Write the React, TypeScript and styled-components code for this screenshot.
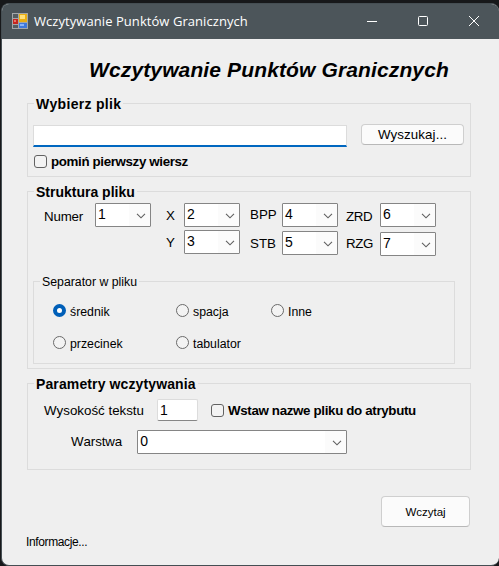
import React from "react";
import styled, { createGlobalStyle } from "styled-components";

const GlobalStyle = createGlobalStyle`
  *, *::before, *::after { box-sizing: border-box; }
  html, body, #root { height: 100%; }
  body {
    margin: 0;
    background: #17181a;
    overflow: hidden;
    color: #000;
    font: 13.33px/16px "Liberation Sans", Arial, sans-serif;
    font-kerning: none;
  }
`;

const Desktop = styled.div`
  width: 499px;
  height: 566px;
  padding: 3px 0 0 1px;
`;

const Window = styled.main`
  width: 498px;
  height: 563px;
  display: flex;
  flex-direction: column;
  overflow: hidden;
  border: 1px solid #454e53;
  border-right: 0;
  border-radius: 8px;
  background: #efefef;
`;

const TitleBar = styled.header`
  flex: none;
  height: 35px;
  display: flex;
  align-items: center;
  padding: 0 0 1px 10px;
  background: #4c555a;
  color: #fff;
`;

const Caption = styled.span`
  flex: 1;
  margin-left: 6px;
  font: 13px/18px "Open Sans", "Noto Sans", sans-serif;
  letter-spacing: 0.06px;
  white-space: nowrap;
`;

const WindowButtons = styled.div`
  display: flex;
  gap: 41px;
  margin-right: 20px;
  svg { display: block; }
`;

const Client = styled.form`
  flex: 1;
  display: flex;
  flex-direction: column;
  padding: 0 28px 0 25px;
`;

const Heading = styled.h1`
  margin: 19px 0 0 62px;
  font-size: 21px;
  line-height: 24px;
  font-weight: bold;
  font-style: italic;
  letter-spacing: 0.13px;
  white-space: nowrap;
`;

const Group = styled.fieldset<{ $height: number; $top: number }>`
  min-width: 0;
  height: ${(p) => p.$height}px;
  margin: ${(p) => p.$top}px 0 0;
  padding: 0 0 0 5px;
  border: 1px solid #dcdcdc;
`;

const Legend = styled.legend<{ $tracking?: number; $small?: boolean }>`
  height: 15px;
  margin-left: 1px;
  padding: 0 2px;
  font-size: ${(p) => (p.$small ? 12.3 : 14)}px;
  font-weight: ${(p) => (p.$small ? "normal" : "bold")};
  letter-spacing: ${(p) => p.$tracking ?? 0}px;
  white-space: nowrap;
`;

const Row = styled.div<{ $top?: number; $left?: number }>`
  display: flex;
  align-items: flex-start;
  padding: ${(p) => p.$top ?? 0}px 0 0 ${(p) => p.$left ?? 0}px;
`;

const FileInput = styled.input`
  width: 314px;
  height: 22px;
  margin-top: 1px;
  border: 1px solid #dcdcdc;
  border-bottom: 2px solid #0067c0;
  background: #fff;
  outline: none;
`;

const SizeInput = styled.input`
  width: 41px;
  height: 22px;
  margin-left: 13px;
  padding: 0 2px;
  border: 1px solid #dcdcdc;
  border-bottom-color: #868686;
  border-radius: 2px;
  background: #fff;
  font: 14px/18px "Liberation Sans", Arial, sans-serif;
  outline: none;
`;

const PushButton = styled.button<{ $width: number; $height: number; $size: number; $tracking?: number }>`
  width: ${(p) => p.$width}px;
  height: ${(p) => p.$height}px;
  padding: 0;
  border: 1px solid #cfcfcf;
  border-bottom-color: #b8b8b8;
  border-radius: 4px;
  background: #fbfbfb;
  color: #000;
  font: ${(p) => p.$size}px/16px "Liberation Sans", Arial, sans-serif;
  letter-spacing: ${(p) => p.$tracking ?? 0}px;
`;

const CheckLabel = styled.label<{ $tracking: number }>`
  display: flex;
  align-items: center;
  gap: 4px;
  height: 15px;
  font-weight: bold;
  letter-spacing: ${(p) => p.$tracking}px;
  white-space: nowrap;
`;

const CheckBox = styled.input.attrs({ type: "checkbox" })`
  appearance: none;
  flex: none;
  width: 13px;
  height: 13px;
  margin: 0;
  border: 1px solid #626262;
  border-radius: 3px;
  background: #f3f3f3;
`;

const Columns = styled.div`
  display: flex;
  height: 75px;
  padding: 4px 0 0 11px;
`;

const FieldColumn = styled.div<{ $width: number; $left: number; $gap: number }>`
  display: flex;
  flex-direction: column;
  gap: ${(p) => p.$gap}px;
  width: ${(p) => p.$width}px;
  margin-left: ${(p) => p.$left}px;
`;

const Field = styled.label`
  display: flex;
  justify-content: space-between;
  height: 24px;
`;

const LabelText = styled.span<{ $top?: number; $tracking?: number }>`
  padding-top: ${(p) => p.$top ?? 0}px;
  letter-spacing: ${(p) => p.$tracking ?? 0}px;
  white-space: nowrap;
`;

const Combo = styled.span<{ $width: number }>`
  display: flex;
  justify-content: space-between;
  width: ${(p) => p.$width}px;
  height: 24px;
  padding: 2px 4px 0 2px;
  border: 1px solid #858585;
  border-radius: 1px;
  background: linear-gradient(90deg, #fff calc(100% - 21px), #fbfbfb calc(100% - 21px));
  font-size: 14px;
  line-height: 16px;
  svg { display: block; margin-top: 7px; }
`;

const Separators = styled.div`
  display: grid;
  grid-template-columns: 123px 95px auto;
  grid-auto-rows: 32px;
  padding: 13px 0 0 14px;
`;

const RadioLabel = styled.label`
  display: flex;
  gap: 4px;
  height: 18px;
  font-size: 12.3px;
  white-space: nowrap;
  span { padding-top: 2px; }
`;

const Radio = styled.input.attrs({ type: "radio", name: "separator" })`
  appearance: none;
  flex: none;
  width: 13px;
  height: 13px;
  margin: 2px 0 0;
  border: 1px solid #6a6a6a;
  border-radius: 50%;
  background: #f3f3f3;
  &:checked {
    border: 4px solid #005fb8;
    background: #fff;
  }
`;

const Actions = styled.div`
  display: flex;
  justify-content: flex-end;
  margin-top: 26px;
  padding-right: 1px;
`;

const Status = styled.footer`
  margin: 7px 0 0 -1px;
  font-size: 12px;
  letter-spacing: -0.37px;
`;

const AppIcon = () => (
  <svg width="16" height="16" viewBox="0 0 16 16" shapeRendering="crispEdges">
    <rect width="16" height="16" fill="#a4a7a9" />
    <rect x="1" y="1" width="5" height="4" fill="#555d61" />
    <rect x="1" y="6" width="5" height="5" fill="#c5271f" />
    <rect x="2" y="7" width="2" height="2" fill="#ec7469" />
    <rect x="1" y="12" width="5" height="3" fill="#555d61" />
    <rect x="7" y="1" width="8" height="8" fill="#e9ae12" />
    <rect x="8" y="2" width="5" height="4" fill="#ffe07a" />
    <rect x="7" y="10" width="8" height="5" fill="#3f79dc" />
    <rect x="8" y="11" width="4" height="2" fill="#8bb4fa" />
  </svg>
);

const Chevron = () => (
  <svg width="10" height="6" viewBox="0 0 10 6" fill="none" stroke="#5f5f5f" strokeWidth="1.1">
    <path d="M1 .8 5 4.8 9 .8" />
  </svg>
);

const ComboBox = ({ value, width = 56 }: { value: string; width?: number }) => (
  <Combo $width={width}>
    {value}
    <Chevron />
  </Combo>
);

type FieldSpec = { label: string; value: string; top: number; tracking?: number };
const columns: { width: number; left: number; gap: number; fields: FieldSpec[] }[] = [
  { width: 107, left: 0, gap: 0, fields: [{ label: "Numer", value: "1", top: 6, tracking: -0.2 }] },
  { width: 74, left: 15, gap: 3, fields: [{ label: "X", value: "2", top: 5 }, { label: "Y", value: "3", top: 5 }] },
  { width: 88, left: 10, gap: 4, fields: [{ label: "BPP", value: "4", top: 4 }, { label: "STB", value: "5", top: 5 }] },
  { width: 90, left: 8, gap: 5, fields: [{ label: "ZRD", value: "6", top: 6, tracking: -0.4 }, { label: "RZG", value: "7", top: 4, tracking: -0.4 }] },
];

const separators = ["średnik", "spacja", "Inne", "przecinek", "tabulator"];

const SeparatorFrame = styled(Group)`
  width: 422px;
`;

const SeparatorGroup = () => (
  <SeparatorFrame $height={90} $top={0}>
    <Legend $small>Separator w pliku</Legend>
    <Separators>
      {separators.map((name, index) => (
        <RadioLabel key={name}>
          <Radio defaultChecked={index === 0} />
          <span>{name}</span>
        </RadioLabel>
      ))}
    </Separators>
  </SeparatorFrame>
);

export default function App() {
  return (
    <>
      <GlobalStyle />
      <Desktop>
        <Window>
          <TitleBar>
            <AppIcon />
            <Caption>Wczytywanie Punktów Granicznych</Caption>
            <WindowButtons>
              <svg width="10" height="10" viewBox="0 0 10 10" stroke="#fff"><path d="M0 5.5h10" /></svg>
              <svg width="10" height="10" viewBox="0 0 10 10" stroke="#fff" fill="none"><rect x=".5" y=".5" width="9" height="9" rx="1" /></svg>
              <svg width="10" height="10" viewBox="0 0 10 10" stroke="#fff"><path d="M0 0 10 10M10 0 0 10" /></svg>
            </WindowButtons>
          </TitleBar>
          <Client>
            <Heading>Wczytywanie Punktów Granicznych</Heading>

            <Group $height={81} $top={14}>
              <Legend $tracking={0.3}>Wybierz plik</Legend>
              <Row $top={13}>
                <FileInput />
                <Row $left={14}>
                  <PushButton type="button" $width={103} $height={21} $size={13.33} $tracking={0.1}>Wyszukaj...</PushButton>
                </Row>
              </Row>
              <Row $top={7} $left={1}>
                <CheckLabel $tracking={-0.36}><CheckBox />pomiń pierwszy wiersz</CheckLabel>
              </Row>
            </Group>

            <Group $height={185} $top={7}>
              <Legend>Struktura pliku</Legend>
              <Columns>
                {columns.map((column) => (
                  <FieldColumn key={column.fields[0].label} $width={column.width} $left={column.left} $gap={column.gap}>
                    {column.fields.map((field) => (
                      <Field key={field.label}>
                        <LabelText $top={field.top} $tracking={field.tracking}>{field.label}</LabelText>
                        <ComboBox value={field.value} />
                      </Field>
                    ))}
                  </FieldColumn>
                ))}
              </Columns>
              <SeparatorGroup />
            </Group>

            <Group $height={94} $top={7}>
              <Legend $tracking={0.12}>Parametry wczytywania</Legend>
              <Row $top={8} $left={11}>
                <LabelText $top={4}>Wysokość tekstu</LabelText>
                <SizeInput defaultValue="1" />
                <Row $top={4} $left={13}>
                  <CheckLabel $tracking={-0.34}><CheckBox />Wstaw nazwe pliku do atrybutu</CheckLabel>
                </Row>
              </Row>
              <Row $top={9} $left={38}>
                <LabelText $top={4} $tracking={-0.1}>Warstwa</LabelText>
                <Row $left={15}><ComboBox value="0" width={210} /></Row>
              </Row>
            </Group>

            <Actions>
              <PushButton type="button" $width={89} $height={31} $size={11.5}>Wczytaj</PushButton>
            </Actions>
            <Status>Informacje...</Status>
          </Client>
        </Window>
      </Desktop>
    </>
  );
}
